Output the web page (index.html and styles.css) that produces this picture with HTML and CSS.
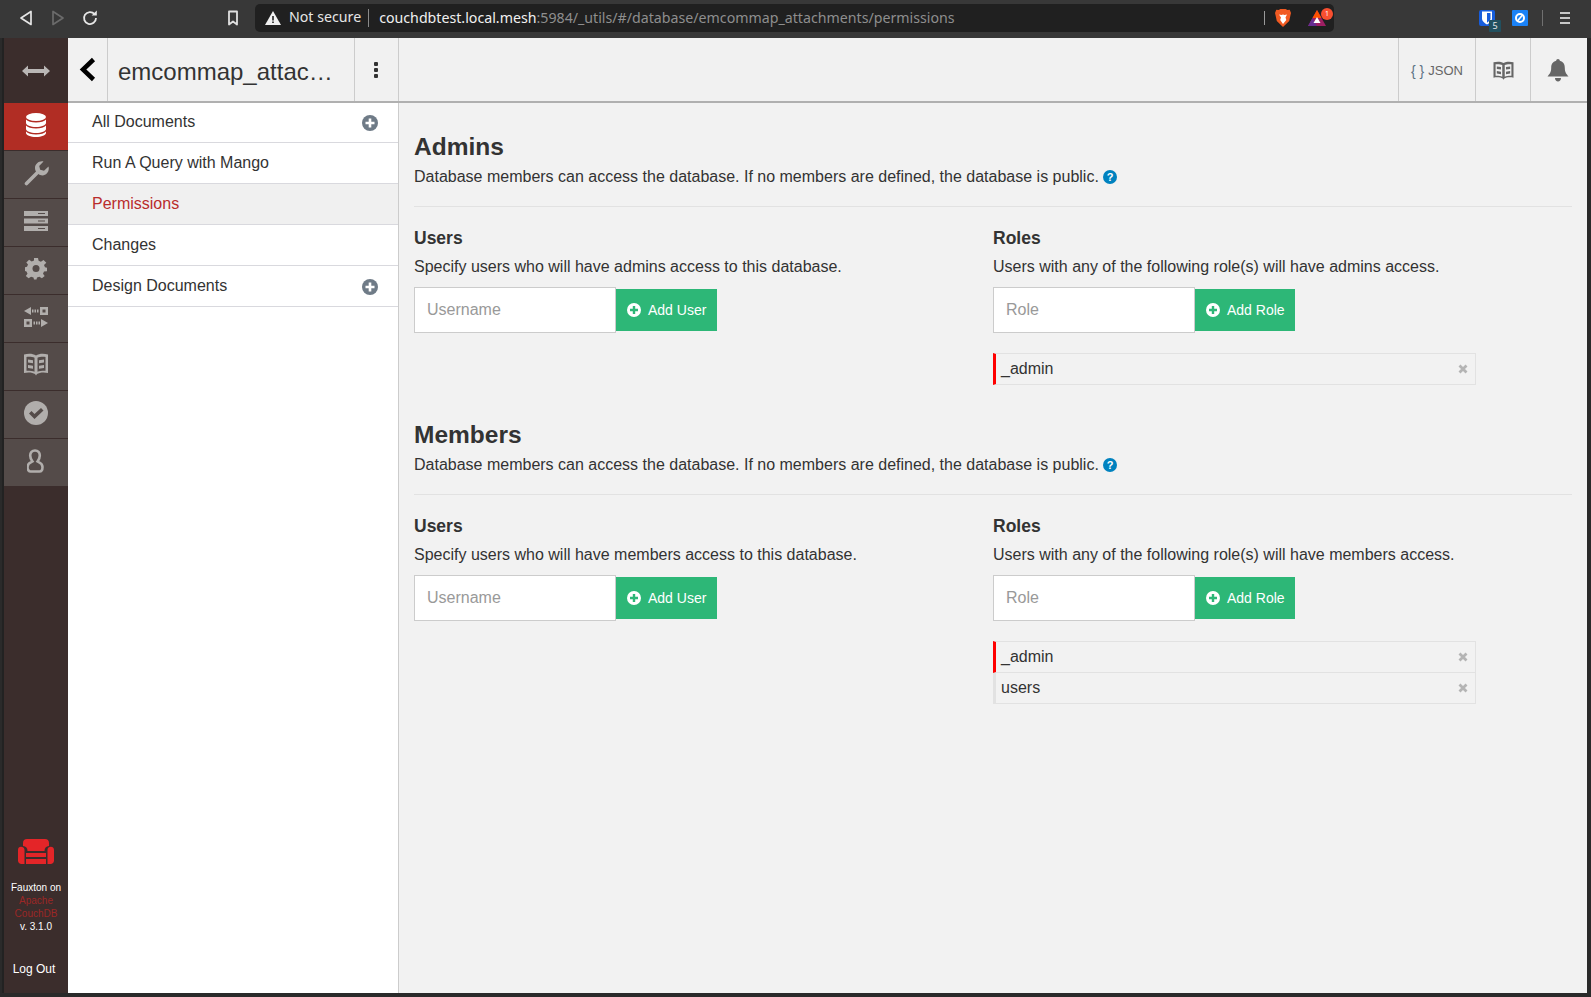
FILE: index.html
```html
<!DOCTYPE html>
<html lang="en">
  <head>
    <meta charset="UTF-8" />
    <title>Permissions</title>
    <link rel="stylesheet" href="styles.css">
  </head>
  <body>
    <div class="toolbar">
      <button class="tool-btn back-btn">
        <svg width="14" height="16" viewBox="0 0 14 16"><path d="M12 1.5v13L2 8z" fill="none" stroke="#e6e6e6" stroke-width="1.7" stroke-linejoin="round"/></svg>
      </button>
      <button class="tool-btn fwd-btn">
        <svg width="14" height="16" viewBox="0 0 14 16"><path d="M2 1.5v13L12 8z" fill="none" stroke="#6b6b6b" stroke-width="1.7" stroke-linejoin="round"/></svg>
      </button>
      <button class="tool-btn reload-btn">
        <svg width="16" height="16" viewBox="0 0 16 16"><path d="M12.6 4.2A6 6 0 1 0 14 8" fill="none" stroke="#e6e6e6" stroke-width="1.8"/><path d="M9.6 5.6h5.2V.6z" fill="#e6e6e6"/></svg>
      </button>
      <button class="tool-btn bookmark-btn">
        <svg width="12" height="16" viewBox="0 0 12 16"><path d="M2 1.500h8v13L6 11.500l-4 3z" fill="none" stroke="#e0e0e0" stroke-width="1.800" stroke-linejoin="round"/></svg>
      </button>
      <div class="urlbar">
        <svg class="warn-icon" width="16" height="14" viewBox="0 0 16 14"><path d="M8 0l8 14H0z" fill="#f0f0f0"/><path d="M7.200 5h1.600v4.400H7.200zM7.200 10.400h1.600V12H7.200z" fill="#202020"/></svg>
        <span class="not-secure">Not secure</span>
        <span class="url"><span class="url-host">couchdbtest.local.mesh</span>:5984/_utils/#/database/emcommap_attachments/permissions</span>
        <span class="url-end">
          <svg class="brave" width="16" height="18" viewBox="0 0 16 18"><path d="M3.600 1L5.400 0h5.200l1.800 1 2.300-.2L16 4l-.6 2.500L14.200 12 8 18l-6.200-6L.6 6.500 0 4 1.300.8z" fill="#f15a22"/><path d="M4 5.500l2.500.5L8 5.500l1.500.5 2.500-.5-1.500 3 .8 2.500L8 15l-2.800-4L6 8.500z" fill="#fff"/></svg>
          <span class="bat">
            <svg width="18" height="16" viewBox="0 0 18 16"><path d="M9 0l9 16H0z" fill="#9e1f63"/><path d="M0 16l4.500-8L9 16z" fill="#662d91"/><path d="M9 0l4.500 8h-9z" fill="#ff5000"/><path d="M9 7l3.500 6h-7z" fill="#fff"/></svg>
            <span class="bat-count">1</span>
          </span>
        </span>
      </div>
      <div class="extensions">
        <span class="bitwarden">
          <svg width="16" height="16" viewBox="0 0 16 16"><rect width="16" height="16" rx="2" fill="#175ddc"/><path d="M3 1.500h10v7c0 2.800-2.800 4.700-5 6-2.200-1.300-5-3.200-5-6z" fill="#fff"/><path d="M8 3h3.500v5.500c0 1.800-1.800 3.100-3.500 4.200z" fill="#175ddc"/></svg>
          <span class="bitwarden-count">5</span>
        </span>
        <svg width="16" height="16" viewBox="0 0 16 16"><rect width="16" height="16" rx="1" fill="#1a82f7"/><circle cx="8" cy="8" r="4" fill="none" stroke="#fff" stroke-width="2"/><path d="M5.500 11L10.500 5" stroke="#fff" stroke-width="1.600"/></svg>
        <span class="ext-sep"></span>
        <span class="menu-icon"><i></i><i></i><i></i></span>
      </div>
    </div>

    <div class="app">
      <nav class="sidebar">
        <div class="side-burger">
          <svg width="28" height="12" viewBox="0 0 28 12"><path d="M0 6l6-5.500V4h16V.5L28 6l-6 5.500V8H6v3.500z" fill="#b9b6b5"/></svg>
        </div>
        <a class="side-item active">
          <svg width="20" height="24" viewBox="0 0 20 24"><ellipse cx="10" cy="4" rx="10" ry="4" fill="#fff"/><path d="M0 6.500c1.500 2 5.500 3 10 3s8.500-1 10-3V10c0 2-4.500 4-10 4S0 12 0 10z" fill="#fff"/><path d="M0 12.500c1.500 2 5.500 3 10 3s8.500-1 10-3V16c0 2-4.500 4-10 4S0 18 0 16z" fill="#fff"/><path d="M0 18.500c1.500 2 5.500 3 10 3s8.500-1 10-3V20c0 2-4.500 4-10 4S0 22 0 20z" fill="#fff"/></svg>
        </a>
        <a class="side-item">
          <svg width="25" height="25" viewBox="0 0 25 25"><path d="M2.500 22.500L13.500 11.500" fill="none" stroke="#b1aeac" stroke-width="3.600" stroke-linecap="round"/><path d="M24.500 5.500l-4.500 4.200-3.800-1-1-3.800L19.500.4C15.500-.6 11 2.500 11 7c0 1.800.7 3.300 1.700 4.300l1.500 1.500c1 1 2.500 1.700 4.300 1.700 4.200 0 7.300-4.500 6-9z" fill="#b1aeac"/></svg>
        </a>
        <a class="side-item">
          <svg width="24" height="20" viewBox="0 0 24 20"><path d="M0 0h24v5H0zM0 7.500h24v5H0zM0 15h24v5H0z" fill="#b1aeac"/><path d="M14 2h7v1h-7zM14 9.500h7v1h-7zM14 17h7v1h-7z" fill="#544b49"/></svg>
        </a>
        <a class="side-item">
          <svg width="22" height="22" viewBox="0 0 22 22"><path d="M9 0h4l.6 3 2.300 1 2.600-1.700 2.800 2.800L19 7.700 20 10l2 .5v4l-3 .2-1 2.300 1.700 2.500-2.800 2.500-2.500-1.700-2.400 1-.5 2H9l-.5-2-2.400-1-2.500 1.700L.8 19.500 2.500 17l-1-2.300L0 14v-4l2-.5 1-2.300L1.300 4.800l2.800-2.800 2.600 1.700L9 2.700z" transform="scale(1 .92)" fill="#b1aeac"/><circle cx="11" cy="10.500" r="3.500" fill="#544b49"/></svg>
        </a>
        <a class="side-item">
          <svg width="24" height="20" viewBox="0 0 24 20"><path d="M0 4L7 0v8zM8 2.500h1.500v3H8zM10.500 2.500H12v3h-1.500zM13 2.500h1.500v3H13zM16 0h8v8h-8zM18.500 2.500v3h3v-3zM0 12h8v8H0zM2.500 14.500v3h3v-3zM9.500 14.500H11v3H9.500zM12 14.500h1.500v3H12zM14.500 14.500H16v3h-1.500zM17 12l7 4-7 4z" fill="#b1aeac" fill-rule="evenodd"/></svg>
        </a>
        <a class="side-item">
          <svg width="24" height="24" viewBox="0 0 24 24"><path d="M0 1.500C4 .5 9 .5 12 2.500c3-2 8-2 12-1V20c-4-1-9-.5-11 1l-1 1.500L11 21c-2-1.500-7-2-11-1z" fill="#b1aeac"/><path d="M2.500 4c2.500-.3 6-.2 8 .8v14c-2-.8-5.500-1.200-8-1zM13.500 4.800c2-1 5.500-1.100 8-.8v13.800c-2.500-.2-6 .2-8 1z" fill="#544b49"/><path d="M4 6.500l5 .8v3L4 9.500zM4 12l5 .8v3L4 15zM15 7.300l5-.8v3l-5 .8zM15 12.800l5-.8v3l-5 .8z" fill="#b1aeac"/></svg>
        </a>
        <a class="side-item">
          <svg width="24" height="24" viewBox="0 0 24 24"><circle cx="12" cy="12" r="12" fill="#b1aeac"/><path d="M5 12.500l2.500-2.500 3 3L17 7l2.500 2.500-9 8.500z" fill="#544b49"/></svg>
        </a>
        <a class="side-item">
          <svg width="18" height="24" viewBox="1 0 18 24"><path d="M9 1.500c3 0 4.800 2.200 4.800 5S12.500 11 11.500 12.500c1.500 1 5 1.500 5 5.500 0 3-1.500 4.500-3 4.500h-9c-1.500 0-3-1.500-3-4.500 0-4 3.500-4.500 5-5.500C5.500 11 4.200 9.300 4.200 6.500s1.800-5 4.800-5z" fill="none" stroke="#b1aeac" stroke-width="2.600"/></svg>
        </a>
        <div class="side-footer">
          <svg class="couch" width="36" height="25" viewBox="0 0 36 25"><path d="M5 4c0-2.500 1.500-4 4-4h18c2.500 0 4 1.500 4 4v3c-3 .3-4.500 2-4.500 5h-17c0-3-1.500-4.700-4.500-5z" fill="#e42528"/><path d="M0 11c0-2 1.300-3.200 3-3.200S6.500 9 6.500 11v14H3.500C1.500 25 0 23.500 0 21.500zM29.500 11c0-2 1.500-3.200 3.300-3.200S36 9 36 11v10.500c0 2-1.500 3.500-3.500 3.500h-3z" fill="#e42528"/><path d="M8 14h20v4H8zM8 20h20v5H8z" fill="#e42528"/></svg>
          <div class="version">
            Fauxton on<br />
            <a class="apache">Apache CouchDB</a><br />
            v. 3.1.0
          </div>
          <a class="logout">Log Out</a>
        </div>
      </nav>

      <div class="page">
        <header class="topbar">
          <div class="topbar-left">
            <a class="back-cell">
              <svg width="17" height="25" viewBox="0 0 17 25"><path d="M14.500 2.500L4 12.500l10.500 10" fill="none" stroke="#000" stroke-width="4.500"/></svg>
            </a>
            <div class="db-title">emcommap_attac…</div>
            <a class="dots-cell"><i></i><i></i><i></i></a>
          </div>
          <div class="topbar-right">
            <a class="json-cell"><span class="braces">{ }</span> JSON</a>
            <a class="docs-cell">
              <svg width="21" height="20" viewBox="0 0 24 24"><path d="M0 1.500C4 .5 9 .5 12 2.500c3-2 8-2 12-1V20c-4-1-9-.5-11 1l-1 1.500L11 21c-2-1.500-7-2-11-1z" fill="#666"/><path d="M2.500 4c2.500-.3 6-.2 8 .8v14c-2-.8-5.500-1.200-8-1zM13.500 4.800c2-1 5.500-1.100 8-.8v13.800c-2.500-.2-6 .2-8 1z" fill="#f1f1f1"/><path d="M4 6.500l5 .8v3L4 9.500zM4 12l5 .8v3L4 15zM15 7.300l5-.8v3l-5 .8zM15 12.800l5-.8v3l-5 .8z" fill="#666"/></svg>
            </a>
            <a class="bell-cell">
              <svg width="22" height="23" viewBox="0 0 22 23"><path d="M11 0c1 0 1.800.8 1.800 1.800 3.500.8 5 3.500 5 7 0 5 2 6.500 3.700 8.700H.5C2.200 15.300 4.200 13.800 4.200 8.800c0-3.500 1.500-6.200 5-7C9.200.8 10 0 11 0z" fill="#666"/><path d="M8 19h6c0 2-1.300 3.500-3 3.500S8 21 8 19z" fill="#666"/></svg>
            </a>
          </div>
        </header>

        <div class="body-row">
          <aside class="subnav">
            <a class="subnav-item">All Documents
              <svg class="plus" width="16" height="16" viewBox="0 0 16 16"><circle cx="8" cy="8" r="8" fill="#6f7b87"/><path d="M6.700 3.500h2.600v3.200h3.200v2.600H9.300v3.200H6.700V9.300H3.500V6.700h3.200z" fill="#fff"/></svg>
            </a>
            <a class="subnav-item">Run A Query with Mango</a>
            <a class="subnav-item selected">Permissions</a>
            <a class="subnav-item">Changes</a>
            <a class="subnav-item">Design Documents
              <svg class="plus" width="16" height="16" viewBox="0 0 16 16"><circle cx="8" cy="8" r="8" fill="#6f7b87"/><path d="M6.700 3.500h2.600v3.200h3.200v2.600H9.300v3.200H6.700V9.300H3.500V6.700h3.200z" fill="#fff"/></svg>
            </a>
          </aside>

          <main class="content">
            <section class="perm-section">
              <h2>Admins</h2>
              <p class="perm-desc">Database members can access the database. If no members are defined, the database is public.
                <svg class="help" width="14" height="14" viewBox="0 0 14 14"><circle cx="7" cy="7" r="7" fill="#0082bf"/><text x="7" y="11" text-anchor="middle" class="help-mark">?</text></svg>
              </p>
              <hr />
              <div class="perm-cols">
                <div class="perm-col">
                  <h3>Users</h3>
                  <p>Specify users who will have admins access to this database.</p>
                  <form class="add-form">
                    <input type="text" placeholder="Username" />
                    <button type="button" class="add-btn">
                      <svg width="14" height="14" viewBox="0 0 14 14"><circle cx="7" cy="7" r="7" fill="#fff"/><path d="M5.800 3h2.400v2.800H11v2.400H8.200V11H5.800V8.200H3V5.800h2.800z" fill="#2db777"/></svg>
                      Add User
                    </button>
                  </form>
                </div>
                <div class="perm-col">
                  <h3>Roles</h3>
                  <p>Users with any of the following role(s) will have admins access.</p>
                  <form class="add-form">
                    <input type="text" placeholder="Role" />
                    <button type="button" class="add-btn">
                      <svg width="14" height="14" viewBox="0 0 14 14"><circle cx="7" cy="7" r="7" fill="#fff"/><path d="M5.800 3h2.400v2.800H11v2.400H8.200V11H5.800V8.200H3V5.800h2.800z" fill="#2db777"/></svg>
                      Add Role
                    </button>
                  </form>
                  <ul class="role-list">
                    <li class="role first">_admin
                      <svg class="role-x" width="10" height="10" viewBox="0 0 10 10"><path d="M1.500 1.500l7 7M8.500 1.500l-7 7" stroke="#b4b4b4" stroke-width="2.800"/></svg>
                    </li>
                  </ul>
                </div>
              </div>
            </section>

            <section class="perm-section">
              <h2>Members</h2>
              <p class="perm-desc">Database members can access the database. If no members are defined, the database is public.
                <svg class="help" width="14" height="14" viewBox="0 0 14 14"><circle cx="7" cy="7" r="7" fill="#0082bf"/><text x="7" y="11" text-anchor="middle" class="help-mark">?</text></svg>
              </p>
              <hr />
              <div class="perm-cols">
                <div class="perm-col">
                  <h3>Users</h3>
                  <p>Specify users who will have members access to this database.</p>
                  <form class="add-form">
                    <input type="text" placeholder="Username" />
                    <button type="button" class="add-btn">
                      <svg width="14" height="14" viewBox="0 0 14 14"><circle cx="7" cy="7" r="7" fill="#fff"/><path d="M5.800 3h2.400v2.800H11v2.400H8.200V11H5.800V8.200H3V5.800h2.800z" fill="#2db777"/></svg>
                      Add User
                    </button>
                  </form>
                </div>
                <div class="perm-col">
                  <h3>Roles</h3>
                  <p>Users with any of the following role(s) will have members access.</p>
                  <form class="add-form">
                    <input type="text" placeholder="Role" />
                    <button type="button" class="add-btn">
                      <svg width="14" height="14" viewBox="0 0 14 14"><circle cx="7" cy="7" r="7" fill="#fff"/><path d="M5.800 3h2.400v2.800H11v2.400H8.200V11H5.800V8.200H3V5.800h2.800z" fill="#2db777"/></svg>
                      Add Role
                    </button>
                  </form>
                  <ul class="role-list">
                    <li class="role first">_admin
                      <svg class="role-x" width="10" height="10" viewBox="0 0 10 10"><path d="M1.500 1.500l7 7M8.500 1.500l-7 7" stroke="#b4b4b4" stroke-width="2.800"/></svg>
                    </li>
                    <li class="role">users
                      <svg class="role-x" width="10" height="10" viewBox="0 0 10 10"><path d="M1.500 1.500l7 7M8.500 1.500l-7 7" stroke="#b4b4b4" stroke-width="2.800"/></svg>
                    </li>
                  </ul>
                </div>
              </div>
            </section>
          </main>
        </div>
      </div>
    </div>
  </body>
</html>
```

FILE: styles.css
```css
* {
  box-sizing: border-box;
}

html,
body {
  height: 100%;
}

body {
  margin: 0;
  background: #2a2a2a;
  color: #333;
  font-family: "Liberation Sans", Arial, sans-serif;
  font-size: 16px;
  display: flex;
  flex-direction: column;
  overflow: hidden;
}

a {
  color: inherit;
  text-decoration: none;
}

/* browser toolbar */
.toolbar {
  height: 38px;
  flex: none;
  padding-bottom: 2px;
  background: #383838;
  display: flex;
  align-items: center;
  font-family: "Noto Sans", sans-serif;
  font-size: 14.2px;
}

.tool-btn {
  border: 0;
  background: none;
  padding: 0;
  display: flex;
  align-items: center;
  justify-content: center;
  height: 20px;
}

.back-btn {
  width: 14px;
  margin-left: 19px;
}

.fwd-btn {
  width: 14px;
  margin-left: 18px;
}

.reload-btn {
  width: 16px;
  margin-left: 17px;
}

.bookmark-btn {
  width: 12px;
  margin-left: 129px;
}

.urlbar {
  width: 1079px;
  height: 28px;
  margin-left: 16px;
  background: #202020;
  border-radius: 5px;
  display: flex;
  align-items: center;
  padding-left: 10px;
  color: #e6e6e6;
}

.not-secure {
  margin-left: 8px;
  padding: 0 7px 2px 0;
  border-right: 1px solid #8a8a8a;
  line-height: 16px;
}

.url {
  margin: 0 0 2px 10px;
  color: #8e8e8e;
}

.url-host {
  color: #f0f0f0;
}

.url-end {
  margin-left: auto;
  display: flex;
  align-items: center;
  border-left: 1px solid #9a9a9a;
  height: 14px;
  padding-left: 10px;
}

.bat {
  position: relative;
  display: flex;
  margin-left: 17px;
  margin-right: 8px;
}

.bat-count {
  position: absolute;
  top: -2px;
  right: -7px;
  width: 12px;
  height: 12px;
  border-radius: 50%;
  background: #f94f30;
  color: #fff;
  font-size: 7px;
  line-height: 12px;
  text-align: center;
}

.extensions {
  display: flex;
  align-items: center;
  margin-left: 145px;
}

.bitwarden {
  position: relative;
  display: flex;
  margin-right: 17px;
}

.bitwarden-count {
  position: absolute;
  left: 10px;
  top: 10px;
  width: 12px;
  height: 12px;
  background: #22505f;
  color: #e8e8e8;
  font-size: 9px;
  line-height: 12px;
  text-align: center;
  border-radius: 1px;
}

.ext-sep {
  width: 1px;
  height: 16px;
  background: #707070;
  margin: 0 17px 0 14px;
}

.menu-icon {
  width: 10px;
  display: flex;
  flex-direction: column;
  gap: 3px;
}

.menu-icon i {
  height: 2px;
  background: #c8c8c8;
}

/* app frame */
.app {
  flex: 1;
  min-height: 0;
  display: flex;
  margin: 0 4px 4px 2px;
  border-left: 2px solid #222;
}

.sidebar {
  width: 64px;
  flex: none;
  background: #3b2d2c;
  display: flex;
  flex-direction: column;
  color: #fff;
}

.side-burger {
  height: 65px;
  display: flex;
  align-items: center;
  justify-content: center;
}

.side-item {
  height: 48px;
  padding-bottom: 3px;
  background: #544b49;
  border-bottom: 1px solid #3b2d2c;
  display: flex;
  align-items: center;
  justify-content: center;
}

.side-item.active {
  background: #b12d24;
}

.side-footer {
  margin-top: auto;
  display: flex;
  flex-direction: column;
  align-items: center;
  padding-bottom: 17px;
}

.couch {
  margin-bottom: 17px;
}

.version {
  width: 56px;
  text-align: center;
  font-size: 10px;
  line-height: 13px;
  color: #fff;
}

.apache {
  color: #9b2726;
}

.logout {
  margin-top: 29px;
  margin-right: 4px;
  font-size: 12px;
  line-height: 14px;
}

.page {
  flex: 1;
  min-width: 0;
  display: flex;
  flex-direction: column;
  background: #f2f2f2;
}

/* top header */
.topbar {
  height: 65px;
  flex: none;
  display: flex;
  justify-content: space-between;
  border-bottom: 2px solid #b0b0b0;
  background: #f1f1f1;
}

.topbar-left {
  width: 331px;
  display: flex;
  border-right: 1px solid #ccc;
}

.back-cell {
  width: 40px;
  display: flex;
  align-items: center;
  justify-content: center;
  border-right: 1px solid #ccc;
}

.db-title {
  width: 247px;
  padding-left: 10px;
  font-size: 24px;
  line-height: 67px;
  color: #333;
  white-space: nowrap;
  border-right: 1px solid #ccc;
}

.dots-cell {
  flex: 1;
  padding-right: 2px;
  display: flex;
  flex-direction: column;
  align-items: center;
  justify-content: center;
  gap: 2px;
}

.dots-cell i {
  width: 4px;
  height: 4px;
  border-radius: 1px;
  background: #333;
}

.topbar-right {
  display: flex;
}

.json-cell,
.docs-cell,
.bell-cell {
  display: flex;
  align-items: center;
  justify-content: center;
  border-left: 1px solid #ccc;
}

.json-cell {
  width: 77px;
  padding-top: 2px;
  color: #666;
  font-size: 13px;
  gap: 4px;
}

.braces {
  font-size: 14px;
  color: #5d7385;
}

.docs-cell {
  width: 55px;
  padding-top: 3px;
}

.bell-cell {
  width: 57px;
  padding: 1px 2px 0 0;
}

.body-row {
  flex: 1;
  min-height: 0;
  display: flex;
}

/* left sub nav */
.subnav {
  width: 331px;
  flex: none;
  background: #fff;
  border-right: 1px solid #ccc;
}

.subnav-item {
  height: 41px;
  padding: 0 20px 0 24px;
  display: flex;
  align-items: center;
  justify-content: space-between;
  border-bottom: 1px solid #d9d9de;
  color: #333;
}

.subnav-item:first-child {
  height: 40px;
  padding-bottom: 2px;
}

.subnav-item.selected {
  background: #f0f0f0;
  color: #b92c2c;
}

.plus {
  margin-top: 2px;
}

/* main area */
.content {
  flex: 1;
  min-width: 0;
  padding: 29px 15px 0 15px;
}

.perm-section {
  padding-bottom: 35px;
}

h2 {
  margin: 0;
  font-size: 24.5px;
  line-height: 30px;
  color: #333;
}

h3 {
  margin: 0;
  font-size: 17.5px;
  line-height: 24px;
  color: #333;
}

p {
  margin: 0;
  line-height: 24px;
}

.perm-desc {
  margin-top: 3px;
}

.help {
  vertical-align: -2px;
}

.help-mark {
  font-family: "Liberation Sans", sans-serif;
  font-size: 11px;
  font-weight: bold;
  fill: #fff;
}

hr {
  margin: 17px 0 19px;
  border: 0;
  border-top: 1px solid #e2e2e2;
}

.perm-cols {
  display: flex;
}

.perm-col {
  width: 579px;
}

.perm-col h3 + p {
  margin-top: 5px;
}

.add-form {
  display: flex;
  align-items: center;
  margin-top: 8px;
}

.add-form input {
  width: 202px;
  height: 46px;
  padding: 0 12px;
  background: #fff;
  border: 1px solid #ccc;
  font: inherit;
  color: #333;
}

.add-form input::placeholder {
  color: #999;
}

.add-btn {
  height: 42px;
  padding: 0 10.5px 0 11px;
  display: flex;
  align-items: center;
  gap: 7px;
  background: #2db777;
  color: #fff;
  border: 0;
  font-family: inherit;
  font-size: 14px;
}

.role-list {
  list-style: none;
  width: 483px;
  margin: 20px 0 0 0;
  padding: 0;
}

.role {
  height: 31px;
  display: flex;
  align-items: center;
  justify-content: space-between;
  padding: 0 7px 0 5px;
  border: 1px solid #e2e2e2;
  border-left: 3px solid #e2e2e2;
  border-top: 0;
  color: #333;
}

.role.first {
  height: 32px;
  border-top: 1px solid #e2e2e2;
  border-left-color: #f00;
}

.role-x {
  flex: none;
}
```
